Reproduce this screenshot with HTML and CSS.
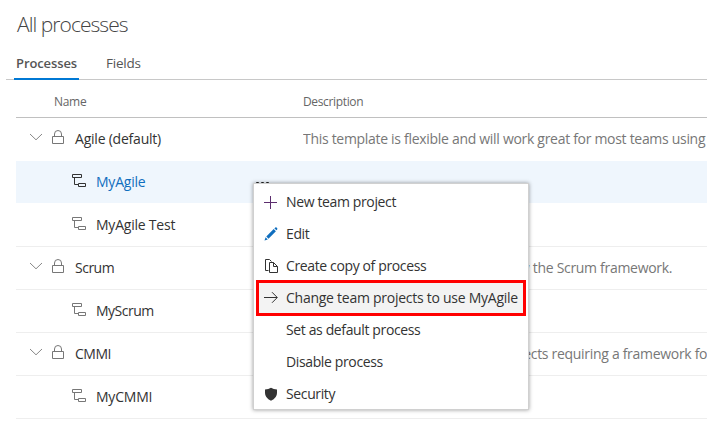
FILE: index.html
```
<!DOCTYPE html>
<html lang="en">
<head>
<meta charset="utf-8">
<title>All processes</title>
<link rel="stylesheet" href="styles.css">
</head>
<body>
<svg class="defs" width="0" height="0">
  <symbol id="chevron" viewBox="0 0 14 8"><path d="M1 1 7 6.8 13 1" fill="none" stroke="currentColor"/></symbol>
  <symbol id="lock" viewBox="0 0 12 15"><path d="M.5 6.500h11v7H.5zM2.500 6.500V4a3.500 3.500 0 0 1 7 0v2.500" fill="none" stroke="currentColor"/></symbol>
  <symbol id="tree" viewBox="0 0 15 15"><path d="M.5 1.500h9v3h-9zM2.500 4.500v7h4M6.500 10.500h7v3h-7z" fill="none" stroke="currentColor"/></symbol>
</svg>
<h1 class="title">All processes</h1>
<nav class="tabs">
  <a class="tab active">Processes</a>
  <a class="tab">Fields</a>
</nav>
<main class="grid">
  <div class="row head"><div class="name">Name</div><div class="desc">Description</div></div>
  <div class="row group plain"><svg class="chev"><use href="#chevron"/></svg><svg class="lock"><use href="#lock"/></svg><span class="label">Agile (default)</span><span class="desc">This template is flexible and will work great for most teams using Agile</span></div>
  <div class="row child selected"><svg class="tree"><use href="#tree"/></svg><span class="label">MyAgile</span>
    <div class="more"><i></i><i></i><i></i>
      <div class="menu">
        <div class="item"><svg class="icon" viewBox="0 0 14 14"><path d="M6.500 1v13M0 7.500h13" fill="none" stroke="#5c2d6e"/></svg><span>New team project</span></div>
        <div class="item"><svg class="icon" viewBox="0 0 14 14"><path d="M.5 13.500 1.600 10.200 3.800 12.400zM2.300 9.500 9.700 2.100 11.900 4.300 4.500 11.700zM10.400 1.400 11.300.5q.8-.5 1.600.3t.3 1.600l-.7.900z" fill="#106ebe"/></svg><span>Edit</span></div>
        <div class="item"><svg class="icon" viewBox="0 0 14 14"><path d="M4.500 11.500h-3V.5h4l2 2M5.500 3.500h4l4 4v6h-8zM9.500 3.500v4h4" fill="none" stroke="#333"/></svg><span>Create copy of process</span></div>
        <div class="item current"><svg class="icon" viewBox="0 0 14 14"><path d="M0 6.500h13M8 1.200 13.300 6.500 8 11.800" fill="none" stroke="#333"/></svg><span>Change team projects to use MyAgile</span></div>
        <div class="item"><span class="icon"></span><span>Set as default process</span></div>
        <div class="item"><span class="icon"></span><span>Disable process</span></div>
        <div class="item"><svg class="icon" viewBox="0 0 14 14"><path d="M7 .8Q9.500 2.500 13 2.500V6q0 5-6 7.700Q1 11 1 6V2.500Q4.500 2.500 7 .8z" fill="#333"/></svg><span>Security</span></div>
      </div>
    </div>
  </div>
  <div class="row child"><svg class="tree"><use href="#tree"/></svg><span class="label">MyAgile Test</span></div>
  <div class="row group"><svg class="chev"><use href="#chevron"/></svg><svg class="lock"><use href="#lock"/></svg><span class="label tight">Scrum</span><span class="desc d2">This template is for teams who follow the Scrum framework.</span></div>
  <div class="row child"><svg class="tree"><use href="#tree"/></svg><span class="label tight">MyScrum</span></div>
  <div class="row group"><svg class="chev"><use href="#chevron"/></svg><svg class="lock"><use href="#lock"/></svg><span class="label tight">CMMI</span><span class="desc d3">This template is for more formal projects requiring a framework for</span></div>
  <div class="row child"><svg class="tree"><use href="#tree"/></svg><span class="label">MyCMMI</span></div>
</main>
</body>
</html>
```
FILE: styles.css
```
* { box-sizing: border-box; }
body { margin: 0; height: 445px; overflow: hidden; background: #fff; color: #333; font: 14px/20px "Open Sans", "Noto Sans", sans-serif; }
.defs { display: block; }
.title { margin: 0; padding: 8px 0 0 17px; height: 48px; font-size: 21px; line-height: 32px; font-weight: 300; letter-spacing: -.95px; color: #444; }
.tabs { display: flex; gap: 19px; height: 32px; margin-left: 6px; padding-left: 8px; border-bottom: 1px solid #c8c8c8; font-size: 13.500px; color: #555; }
.tab { height: 32px; padding: 5px 3px 0 2px; line-height: 20px; letter-spacing: -.2px; }
.tab + .tab { padding-left: 8px; }
.tab.active { width: 65px; border-bottom: 2px solid #0078d4; font-size: 13px; font-weight: 600; letter-spacing: -.1px; }
.grid { margin-left: 16px; }
.row { display: flex; align-items: center; height: 43px; border-bottom: 1px solid #eee; white-space: nowrap; }
.head { height: 38px; padding-top: 6px; border-color: #c0c0c0; font-size: 12px; color: #666; }
.head .name { width: 287px; padding-left: 38px; letter-spacing: -.3px; }
.row.head .desc { font-size: 12px; color: #666; letter-spacing: -.35px; margin: 0; }
.plain { border-color: transparent; }
.selected { border-color: #fff; background: #eff6fd; background-clip: padding-box; }
.group { padding-left: 13px; }
.child { padding-left: 56px; }
.chev { width: 14px; height: 8px; margin-right: 9px; margin-top: -5px; color: #888; flex: none; }
.lock { width: 12px; height: 15px; margin-right: 11px; margin-top: -4px; color: #777; flex: none; }
.tree { width: 15px; height: 15px; margin-right: 9px; margin-top: -3px; color: #777; flex: none; }
.label { font-size: 14px; letter-spacing: -.22px; width: 228px; margin-top: -1px; flex: none; }
.label.tight { letter-spacing: -.5px; }
.child .label { width: 157px; }
.selected .label { color: #106ebe; }
.selected .tree { color: #333; }
.desc { flex: 1; min-width: 0; overflow: hidden; color: #777; letter-spacing: -.3px; margin-top: -1px; }
.d2 { margin-left: -6px; }
.d3 { margin-left: -9px; }
.more { position: relative; display: flex; gap: 2px; padding: 0 3px; }
.more i { width: 3px; height: 3px; margin-top: 2px; border-radius: 1px; background: #222; }
.menu { position: absolute; left: 0; top: 3px; width: 276px; height: 227px; padding: 2px 3px; z-index: 2; background: #fff; border: 1px solid #d0d0d0; box-shadow: 0 0 4px rgba(0,0,0,.4); }
.item { display: flex; align-items: center; gap: 8px; height: 32px; padding-left: 7px; color: #333; letter-spacing: -.37px; }
.icon { width: 14px; height: 14px; flex: none; }
.current { position: relative; background: #f3f3f3; letter-spacing: -.26px; }
.current::after { content: ""; position: absolute; inset: -2px -1px -2px -1px; border: 3px solid #f00; }
```
